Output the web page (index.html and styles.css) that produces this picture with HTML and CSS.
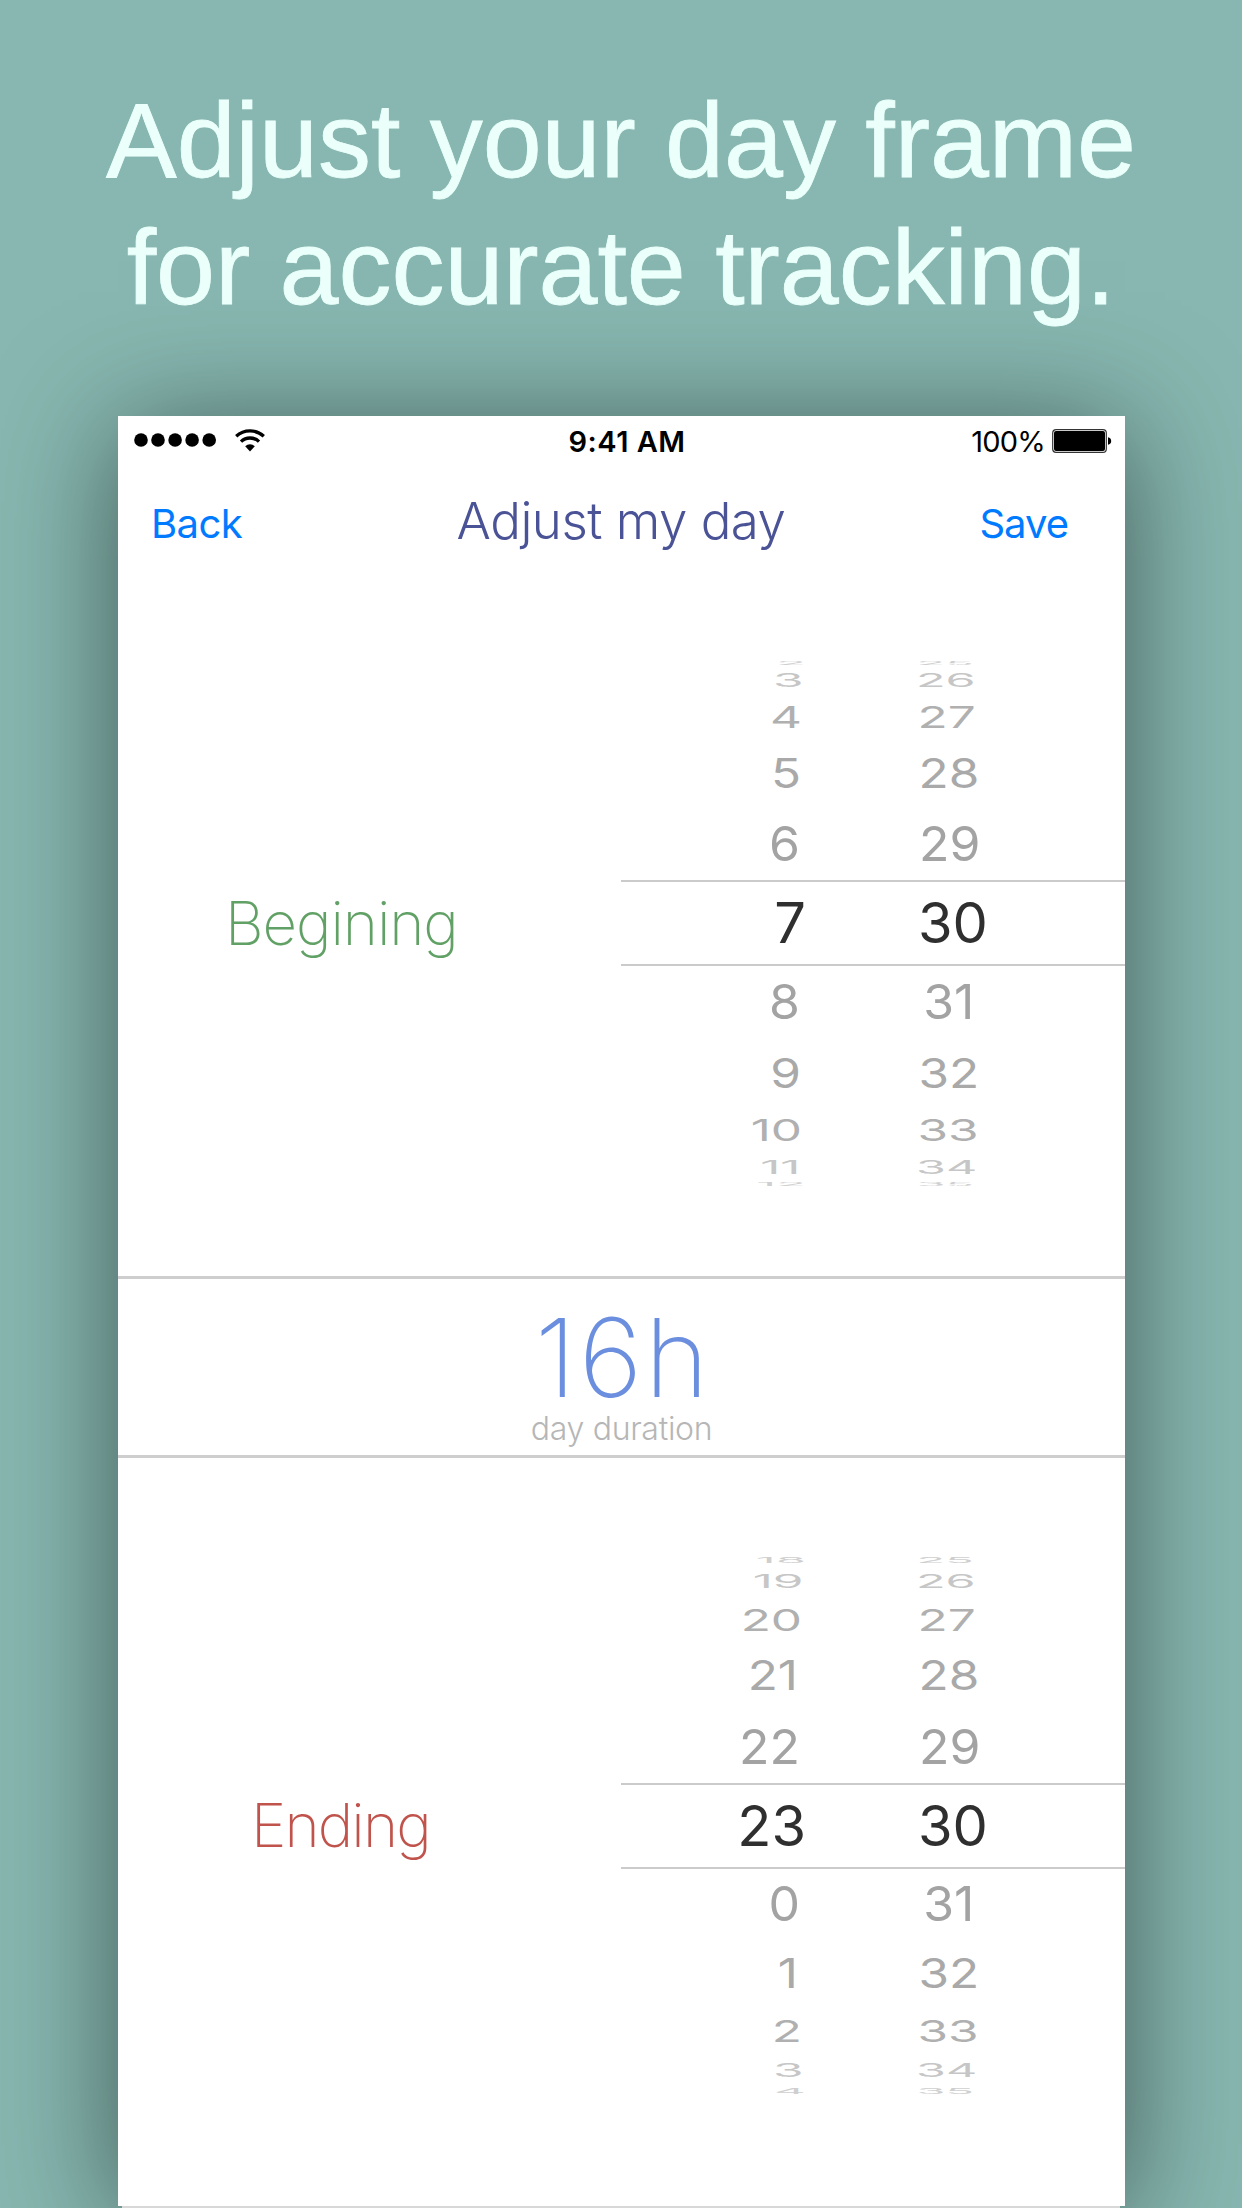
FILE: index.html
```html
<!DOCTYPE html>
<html lang="en">
<head>
<meta charset="utf-8">
<title>Adjust my day</title>
<link rel="stylesheet" href="styles.css">
</head>
<body>
<main class="poster">
  <h1 class="headline">Adjust your day frame<br>for accurate tracking.</h1>

  <div class="screen">
    <div class="status">
      <div class="signal">
        <svg class="dots" width="84" height="16" viewBox="0 0 84 16">
          <circle cx="7" cy="8" r="6.8"/><circle cx="24" cy="8" r="6.8"/><circle cx="41.1" cy="8" r="6.8"/><circle cx="58.1" cy="8" r="6.8"/><circle cx="75.2" cy="8" r="6.8"/>
        </svg>
        <svg class="wifi" width="30" height="23" viewBox="0 0 30 23">
          <path d="M1.2 7.2A20.5 20.5 0 0 1 28.8 7.2" fill="none" stroke="#000" stroke-width="3.3"/>
          <path d="M6 12.6A13 13 0 0 1 24 12.6" fill="none" stroke="#000" stroke-width="3.3"/>
          <path d="M10.2 17.2A7 7 0 0 1 19.8 17.2L15 22.6Z"/>
        </svg>
      </div>
      <div class="clock">9:41 AM</div>
      <div class="power">
        <span class="percent">100%</span>
        <svg width="60" height="24" viewBox="0 0 60 24">
          <rect x="0.7" y="0.7" width="53.6" height="22.6" rx="3.4" fill="#fff" stroke="#333" stroke-width="1.2"/>
          <rect x="2" y="2" width="51" height="20" rx="2"/>
          <path d="M56 8.2c2 .3 3.2 1.8 3.2 3.8s-1.2 3.5-3.2 3.8z"/>
        </svg>
      </div>
    </div>

    <nav class="nav">
      <a class="link back">Back</a>
      <h2 class="title">Adjust my day</h2>
      <a class="link save">Save</a>
    </nav>

    <section class="setting start">
      <div class="label">Begining</div>
      <div class="picker">
        <div class="row r5"><span class="h">2</span><span class="m">25</span></div>
        <div class="row r4"><span class="h">3</span><span class="m">26</span></div>
        <div class="row r3"><span class="h">4</span><span class="m">27</span></div>
        <div class="row r2"><span class="h">5</span><span class="m">28</span></div>
        <div class="row r1"><span class="h">6</span><span class="m">29</span></div>
        <div class="row selected"><span class="h">7</span><span class="m">30</span></div>
        <div class="row r1"><span class="h">8</span><span class="m narrow">31</span></div>
        <div class="row r2"><span class="h">9</span><span class="m">32</span></div>
        <div class="row r3"><span class="h">10</span><span class="m">33</span></div>
        <div class="row r4"><span class="h narrow">11</span><span class="m">34</span></div>
        <div class="row r5"><span class="h">12</span><span class="m">35</span></div>
      </div>
    </section>

    <section class="summary">
      <div class="hours">16h</div>
      <div class="caption">day duration</div>
    </section>

    <section class="setting end">
      <div class="label">Ending</div>
      <div class="picker">
        <div class="row r5"><span class="h">18</span><span class="m">25</span></div>
        <div class="row r4"><span class="h">19</span><span class="m">26</span></div>
        <div class="row r3"><span class="h">20</span><span class="m">27</span></div>
        <div class="row r2"><span class="h narrow">21</span><span class="m">28</span></div>
        <div class="row r1"><span class="h">22</span><span class="m">29</span></div>
        <div class="row selected"><span class="h">23</span><span class="m">30</span></div>
        <div class="row r1"><span class="h">0</span><span class="m narrow">31</span></div>
        <div class="row r2"><span class="h narrow">1</span><span class="m">32</span></div>
        <div class="row r3"><span class="h">2</span><span class="m">33</span></div>
        <div class="row r4"><span class="h">3</span><span class="m">34</span></div>
        <div class="row r5"><span class="h">4</span><span class="m">35</span></div>
      </div>
    </section>
  </div>
  <div class="footline"></div>
</main>
</body>
</html>
```
FILE: styles.css
```css
* { box-sizing: border-box; }

body {
  margin: 0;
  background: #87b7b0;
  font-family: Inter, "Liberation Sans", sans-serif;
}

.poster {
  width: 1242px;
  height: 2208px;
  padding-top: 77px;
  overflow: hidden;
  background: #87b7b0;
}

.headline {
  height: 339px;
  margin: 0;
  color: #ebfffb;
  font: 400 106px/127px "Liberation Sans", Arial, sans-serif;
  letter-spacing: -0.05px;
  text-align: center;
  white-space: nowrap;
  -webkit-text-stroke: 0.8px #ebfffb;
}

.screen {
  width: 1007px;
  height: 1790px;
  margin-left: 118px;
  background: #fff;
  box-shadow: 0 12px 112px rgba(0, 0, 0, 0.51);
}

.footline {
  position: relative;
  width: 998px;
  height: 2px;
  margin-left: 122px;
  background: #d8d8d8;
}

/* Status bar */
.status {
  display: grid;
  grid-template-columns: 1fr auto 1fr;
  align-items: center;
  height: 51px;
  padding: 0 13px 0 16px;
  font-size: 29px;
  line-height: 51px;
}

.signal {
  display: flex;
  align-items: center;
  gap: 17px;
}

.dots { margin-top: -3px; }
.wifi { margin-top: -3px; }

.clock {
  padding-left: 8px;
  font-weight: 600;
  letter-spacing: 0.5px;
}

.power {
  display: flex;
  align-items: center;
  justify-content: flex-end;
  gap: 7px;
}

.power svg { margin-top: -2px; }
.percent { letter-spacing: -0.8px; }

/* Navigation */
.nav {
  display: grid;
  grid-template-columns: 1fr auto 1fr;
  height: 103px;
  padding: 0 57px 0 33px;
}

.link {
  color: #007aff;
  font-size: 40px;
  line-height: 114px;
  letter-spacing: -0.6px;
}

.save {
  letter-spacing: -1px;
  text-align: right;
}

.title {
  margin: 0;
  padding-left: 23px;
  color: #4b5397;
  font-size: 51px;
  font-weight: 300;
  line-height: 108px;
  letter-spacing: -0.5px;
}

/* Time settings */
.setting {
  display: grid;
  grid-template-columns: 503px 504px;
  align-items: start;
}

.start { height: 706px; }
.end { height: 735px; }

.label {
  font-size: 60px;
  font-weight: 200;
}

.start .label {
  padding-left: 107px;
  color: #62a166;
  line-height: 706px;
  letter-spacing: -1.1px;
}

.end .label {
  padding-left: 133px;
  color: #c0534b;
  line-height: 735px;
  letter-spacing: -1.9px;
}

/* Wheel picker: rows get flatter and fainter away from the selection */
.picker { display: grid; }

.start .picker {
  margin-top: 90px;
  grid-template-rows: 5px 30px 44px 69px 72px 86px 72px 71px 42px 32px 1px;
}

.end .picker {
  margin-top: 98px;
  grid-template-rows: 8px 33px 45px 68px 73px 86px 70px 70px 43px 36px 5px;
}

.row {
  display: flex;
  align-items: center;
  font-size: 48px;
  line-height: 0;
}

.h {
  width: 185px;
  text-align: right;
  transform-origin: right center;
}

.h.narrow { padding-right: 3px; }

.m {
  margin-left: 112px;
  transform-origin: left center;
}

.m.narrow { padding-left: 4px; }

.selected {
  border-top: 2px solid #cbcbcb;
  border-bottom: 2px solid #cbcbcb;
  color: #2f2f30;
  font-size: 56px;
}

.r1 { color: #a3a3a3; }
.r1 .h { transform: translateX(-6px) scale(1.04, 1); }
.r1 .m { transform: translateX(1px) scale(1.04, 1); }

.r2 { color: #a9a9a9; }
.r2 .h { transform: translateX(-5px) scale(1.03, 0.85); }
.r2 .m { transform: translateX(0.5px) scale(1.03, 0.85); }

.r3 { color: #b0b0b0; }
.r3 .h { transform: translateX(-4px) scale(1.03, 0.62); }
.r3 .m { transform: translateX(-0.5px) scale(1.03, 0.62); }

.r4 { color: #c6c6c6; }
.r4 .h { transform: translate(-2.5px, 0.5px) scale(1.03, 0.38); }
.r4 .m { transform: translate(-2px, 0.5px) scale(1.01, 0.38); }

.r5 { color: #cfcfcf; }
.r5 .h { transform: translateX(0) scale(1.02, 0.16); }
.r5 .m { transform: translateX(-1.5px) scale(0.98, 0.16); }

.start .r5 .h { transform: translateX(0) scale(1.02, 0.09); }
.start .r5 .m { transform: translateX(-1.5px) scale(0.98, 0.09); }

/* Duration summary */
.summary {
  height: 182px;
  padding-top: 24px;
  border-top: 3px solid #cecece;
  border-bottom: 3px solid #cecece;
  text-align: center;
}

.hours {
  padding-left: 3px;
  color: #6b8fde;
  font-size: 109px;
  font-weight: 200;
  line-height: 109px;
  letter-spacing: 2.5px;
}

.caption {
  color: #b6b6b6;
  font-size: 32px;
  font-weight: 300;
  line-height: 33px;
  letter-spacing: -0.3px;
}
```
